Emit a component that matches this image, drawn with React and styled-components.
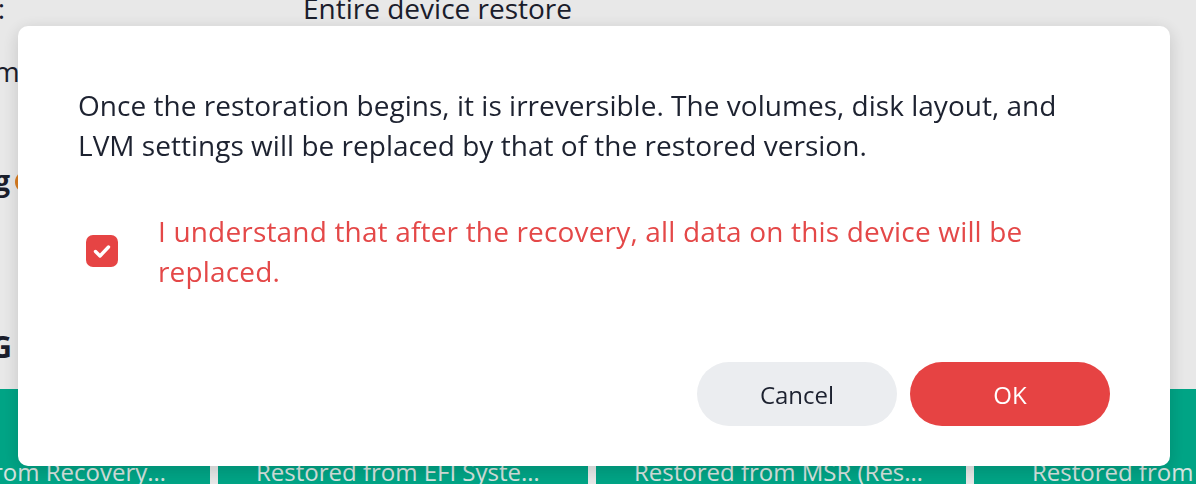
import React, { useState } from "react";
import styled, { createGlobalStyle } from "styled-components";

const Global = createGlobalStyle`
  html, body { margin: 0; padding: 0; background: #ffffff; overflow: hidden; }
  body { font-family: "Open Sans", "Noto Sans", sans-serif; color: #1d2230; }
  * { box-sizing: border-box; }
`;

const Page = styled.div`
  width: 1196px;
  height: 484px;
  display: flex;
  flex-direction: column;
  overflow: hidden;
`;

const InfoRow = styled.div`
  display: flex;
  align-items: center;
  font-size: 28px;
  line-height: 40px;
  margin-top: ${(p) => p.$top}px;
  font-weight: ${(p) => (p.$bold ? 700 : 400)};
`;

const Label = styled.div`
  flex: 0 0 auto;
  width: ${(p) => p.$end}px;
  display: flex;
  justify-content: flex-end;
  white-space: nowrap;
`;

const Value = styled.div`
  margin-left: ${(p) => 303 - p.$end}px;
  white-space: nowrap;
`;

const WarnDot = styled.span`
  flex: 0 0 auto;
  width: 22px;
  height: 22px;
  margin-left: 5px;
  margin-top: 4px;
  border-radius: 50%;
  background: #f08a24;
`;

const Divider = styled.hr`
  border: 0;
  height: 1px;
  width: 100%;
  background: #d6d6d6;
  margin: 99px 0 0;
`;

const Heading = styled.div`
  display: flex;
  justify-content: flex-end;
  width: 12px;
  white-space: nowrap;
  font-size: 30px;
  line-height: 40px;
  font-weight: 700;
  margin-top: 28px;
`;

const CardRow = styled.div`
  display: flex;
  gap: 8px;
  margin-left: -160px;
  margin-top: 22px;
`;

const Card = styled.div`
  flex: 0 0 370px;
  height: 120px;
  background: #00b593;
  color: #eafaf5;
  padding: 67px 38px 0;
  font-size: 24px;
  line-height: 32px;
  text-align: center;
  white-space: nowrap;
  overflow: hidden;
  text-overflow: ellipsis;
`;

const Overlay = styled.div`
  position: fixed;
  inset: 0;
  background: rgba(0, 0, 0, 0.09);
  display: flex;
  align-items: flex-start;
  padding: 26px 26px 18px 18px;
`;

const Modal = styled.div`
  flex: 1;
  background: #ffffff;
  border-radius: 10px;
  box-shadow: 0 4px 18px rgba(0, 0, 0, 0.16);
  padding: 59px 60px 40px 60px;
  display: flex;
  flex-direction: column;
`;

const Message = styled.p`
  margin: 0;
  font-size: 28px;
  line-height: 40px;
  letter-spacing: 0.02px;
  color: #1d2230;
`;

const ConfirmRow = styled.label`
  display: flex;
  align-items: center;
  margin-top: 46px;
  cursor: pointer;
`;

const BoxWrap = styled.span`
  flex: 0 0 48px;
  display: flex;
  justify-content: center;
  margin-right: 32px;
`;

const Box = styled.span`
  width: 32px;
  height: 32px;
  border-radius: 7px;
  background: ${(p) => (p.$checked ? "#e64444" : "#ffffff")};
  border: ${(p) => (p.$checked ? "none" : "2px solid #c9ccd3")};
  display: flex;
  align-items: center;
  justify-content: center;
`;

const ConfirmText = styled.span`
  font-size: 28px;
  line-height: 40px;
  letter-spacing: 0.17px;
  color: #e44848;
`;

const Actions = styled.div`
  display: flex;
  justify-content: flex-end;
  gap: 13px;
  margin-top: 71px;
`;

const Button = styled.button`
  width: 200px;
  height: 64px;
  border: 0;
  border-radius: 32px;
  font-family: inherit;
  font-size: 24px;
  cursor: pointer;
  background: ${(p) => (p.$primary ? "#e64343" : "#ebedf0")};
  color: ${(p) => (p.$primary ? "#ffffff" : "#1d2230")};
`;

export default function App() {
  const [checked, setChecked] = useState(true);
  return (
    <>
      <Global />
      <Page>
        <InfoRow $top={-12}>
          <Label $end={5}>Restore type:</Label>
          <Value $end={5}>Entire device restore</Value>
        </InfoRow>
        <InfoRow $top={23}>
          <Label $end={27}>Platform:</Label>
          <Value $end={27}>DS920+</Value>
        </InfoRow>
        <InfoRow $top={69} $bold>
          <Label $end={10}>Warning</Label>
          <WarnDot />
        </InfoRow>
        <Divider />
        <Heading>MAPPING</Heading>
        <CardRow>
          <Card>Restored from Recovery Partition</Card>
          <Card>Restored from EFI System Partition</Card>
          <Card>Restored from MSR (Reserved)</Card>
          <Card>Restored from C: Drive</Card>
        </CardRow>
      </Page>
      <Overlay>
        <Modal>
          <Message>
            Once the restoration begins, it is irreversible. The volumes, disk
            layout, and LVM settings will be replaced by that of the restored
            version.
          </Message>
          <ConfirmRow onClick={() => setChecked((c) => !c)}>
            <BoxWrap>
              <Box $checked={checked}>
                {checked && (
                  <svg width="32" height="32" viewBox="0 0 32 32">
                    <path
                      d="M9.5 16.5 L14 21 L22.5 12"
                      fill="none"
                      stroke="#ffffff"
                      strokeWidth="3.4"
                      strokeLinecap="round"
                      strokeLinejoin="round"
                    />
                  </svg>
                )}
              </Box>
            </BoxWrap>
            <ConfirmText>
              I understand that after the recovery, all data on this device will
              be replaced.
            </ConfirmText>
          </ConfirmRow>
          <Actions>
            <Button>Cancel</Button>
            <Button $primary>OK</Button>
          </Actions>
        </Modal>
      </Overlay>
    </>
  );
}
